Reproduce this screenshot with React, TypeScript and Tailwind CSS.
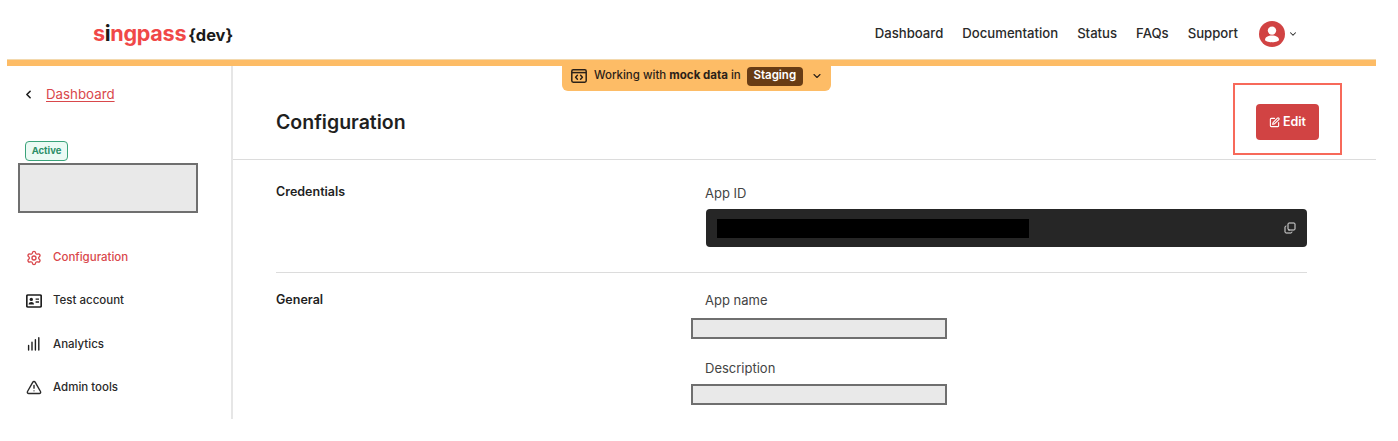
import React from "react";
import { ChevronDown, ChevronLeft, Copy, Settings, SquarePen, TriangleAlert } from "lucide-react";

const navLinks = ["Dashboard", "Documentation", "Status", "FAQs", "Support"];

function IdIcon() {
  return (
    <svg width="16" height="14" viewBox="0 0 16 14" fill="none">
      <rect x="0.8" y="1" width="14.4" height="12" rx="1.2" stroke="#1f1f1f" strokeWidth="1.7" />
      <circle cx="5.3" cy="5.4" r="1.7" fill="#1f1f1f" />
      <path d="M2.6 10.4c0-1.7 1.2-2.5 2.7-2.5s2.7.8 2.7 2.5z" fill="#1f1f1f" />
      <path d="M9.6 5.2h3.4M9.6 8h3.4" stroke="#1f1f1f" strokeWidth="1.3" />
    </svg>
  );
}

function BarsIcon() {
  return (
    <svg width="16" height="14" viewBox="0 0 16 14" fill="none" stroke="#1f1f1f" strokeWidth="1.4" strokeLinecap="round">
      <path d="M2.6 13V8.4M6 13V5.2M9.4 13V2.8M12.8 13V0.8" />
    </svg>
  );
}

function CodeWindowIcon() {
  return (
    <svg width="16" height="14" viewBox="0 0 16 14" fill="none" stroke="#2b2118" strokeWidth="1.5">
      <rect x="0.8" y="0.8" width="14.4" height="12.4" rx="1.4" />
      <path d="M1 3.6h14" />
      <path d="M6.4 6.2 4.6 8.2l1.8 2M9.6 6.2l1.8 2-1.8 2" strokeLinecap="round" strokeLinejoin="round" />
    </svg>
  );
}

function AvatarIcon() {
  return (
    <svg width="26" height="26" viewBox="0 0 26 26">
      <circle cx="13" cy="13" r="13" fill="#d14343" />
      <circle cx="13" cy="9.6" r="4.2" fill="#fff" />
      <path d="M6 19c0-3 3-4.6 7-4.6s7 1.6 7 4.6c0 .8-3 2.2-7 2.2S6 19.800 6 19z" fill="#fff" />
    </svg>
  );
}

function SideItem({ icon, label, active }: { icon: React.ReactNode; label: string; active?: boolean }) {
  return (
    <div className={`flex h-[43.4px] items-center gap-[11px] pl-[19px] text-[11.5px] font-medium ${active ? "text-[#d9474b]" : "text-[#2a2a2a]"}`}>
      <span className="flex w-4 justify-center">{icon}</span>
      {label}
    </div>
  );
}

export default function App() {
  return (
    <div className="relative mx-[7px] h-[441px] w-[1369px] bg-white font-['Inter',sans-serif] text-[#2a2a2a]">
      <header className="flex h-[59px] items-center justify-between pl-[86px] pr-[78px] pt-[7px]">
        <div className="flex items-baseline">
          <span className="text-[21.6px] font-bold tracking-[-0.3px] text-[#f04848]">
            s<span className="text-[#1a1a1a]">i</span>ngpass
          </span>
          <span className="ml-[2px] text-[16.4px] font-bold text-[#1a1a1a]">{"{dev}"}</span>
        </div>
        <nav className="flex items-center pt-[1px]">
          <div className="flex items-center gap-[19px] text-[13.15px] font-medium">
            {navLinks.map((link) => (
              <span key={link}>{link}</span>
            ))}
          </div>
          <div className="ml-[21px] flex items-center gap-[3px]">
            <AvatarIcon />
            <ChevronDown size={10} strokeWidth={2.5} />
          </div>
        </nav>
      </header>

      <div className="h-[7px] border-t border-[#f3d9ae] bg-[#fdbc66]" />

      <div className="flex h-[353px]">
        <aside className="w-[225px] shrink-0">
          <div className="flex items-center gap-[11px] pl-[15px] pt-[19px] text-[13.3px] text-[#d9474b]">
            <ChevronLeft size={13} strokeWidth={3} className="text-[#1f1f1f]" />
            <span className="underline underline-offset-2">Dashboard</span>
          </div>
          <div className="ml-[18px] mt-[36px] flex h-[20px] w-[43px] items-center justify-center rounded-[4px] border border-[#3aa37a] bg-[#ebfaf4] text-[9.5px] font-bold text-[#2c8f68]">
            Active
          </div>
          <div className="ml-[11px] mt-[2px] h-[50px] w-[180px] border-2 border-[#6f6f6f] bg-[#e9e9e9]" />
          <div className="mt-[23px]">
            <SideItem active icon={<Settings size={18} strokeWidth={2} />} label="Configuration" />
            <SideItem icon={<IdIcon />} label="Test account" />
            <SideItem icon={<BarsIcon />} label="Analytics" />
            <SideItem icon={<TriangleAlert size={17} strokeWidth={2.1} />} label="Admin tools" />
          </div>
        </aside>

        <main className="-ml-px min-w-0 flex-1 border-l-2 border-[#e6e6e6]">
          <div className="flex h-[94px] items-center justify-between border-b border-[#dcdcdc] pl-[43px] pr-[57px] pt-[19px]">
            <h1 className="mt-[1px] text-[19.5px] font-semibold text-[#1f1f1f]">Configuration</h1>
            <button className="flex h-[36px] w-[63px] items-center justify-center gap-[3px] rounded-[4px] bg-[#d14343] text-[12.5px] font-semibold text-white">
              <SquarePen size={11} strokeWidth={2.4} />
              Edit
            </button>
          </div>

          <div className="pl-[43px] pr-[69px]">
            <section className="flex h-[113px] border-b border-[#dcdcdc] pt-[24px]">
              <h2 className="w-[429px] shrink-0 text-[12.5px] font-semibold leading-[16px] text-[#1f1f1f]">Credentials</h2>
              <div className="flex-1">
                <div className="text-[13px] leading-[18px] text-[#444]">App ID</div>
                <div className="ml-[1px] mt-[7px] flex h-[38px] items-center justify-between rounded-[4px] bg-[#262626] pl-[11px] pr-[11px]">
                  <div className="h-[19px] w-[312px] bg-black" />
                  <Copy size={12} strokeWidth={2} className="-scale-y-100 text-[#e0e0e0]" />
                </div>
              </div>
            </section>

            <section className="flex pt-[18px]">
              <h2 className="w-[429px] shrink-0 pt-[1px] text-[12.5px] font-semibold leading-[16px] text-[#1f1f1f]">General</h2>
              <div className="flex-1">
                <div className="text-[13px] leading-[18px] text-[#444]">App name</div>
                <div className="-ml-[14px] mt-[9px] h-[21px] w-[256px] border-2 border-[#6f6f6f] bg-[#e9e9e9]" />
                <div className="mt-[20px] text-[13px] leading-[18px] text-[#444]">Description</div>
                <div className="-ml-[14px] mt-[7px] h-[21px] w-[256px] border-2 border-[#6f6f6f] bg-[#e9e9e9]" />
              </div>
            </section>
          </div>
        </main>
      </div>

      {/* environment banner hangs off the orange bar */}
      <div className="absolute left-[555px] top-[66px] flex h-[25px] w-[269px] items-center rounded-b-[6px] bg-[#fdbc66] pb-[5px] pl-[9px] text-[11.5px] font-medium text-[#2b2118]">
        <CodeWindowIcon />
        <span className="ml-[7px]">
          Working with <b className="font-bold">mock data</b> in
        </span>
        <span className="ml-[6px] flex h-[19px] w-[56px] items-center justify-center rounded-[4px] bg-[#683c14] font-semibold text-white">
          Staging
        </span>
        <ChevronDown size={12} strokeWidth={2.2} className="ml-[8px]" />
      </div>

      {/* annotation around the edit button */}
      <div className="absolute left-[1226px] top-[83px] h-[72px] w-[109px] border-2 border-[#f7695a]" />
    </div>
  );
}
